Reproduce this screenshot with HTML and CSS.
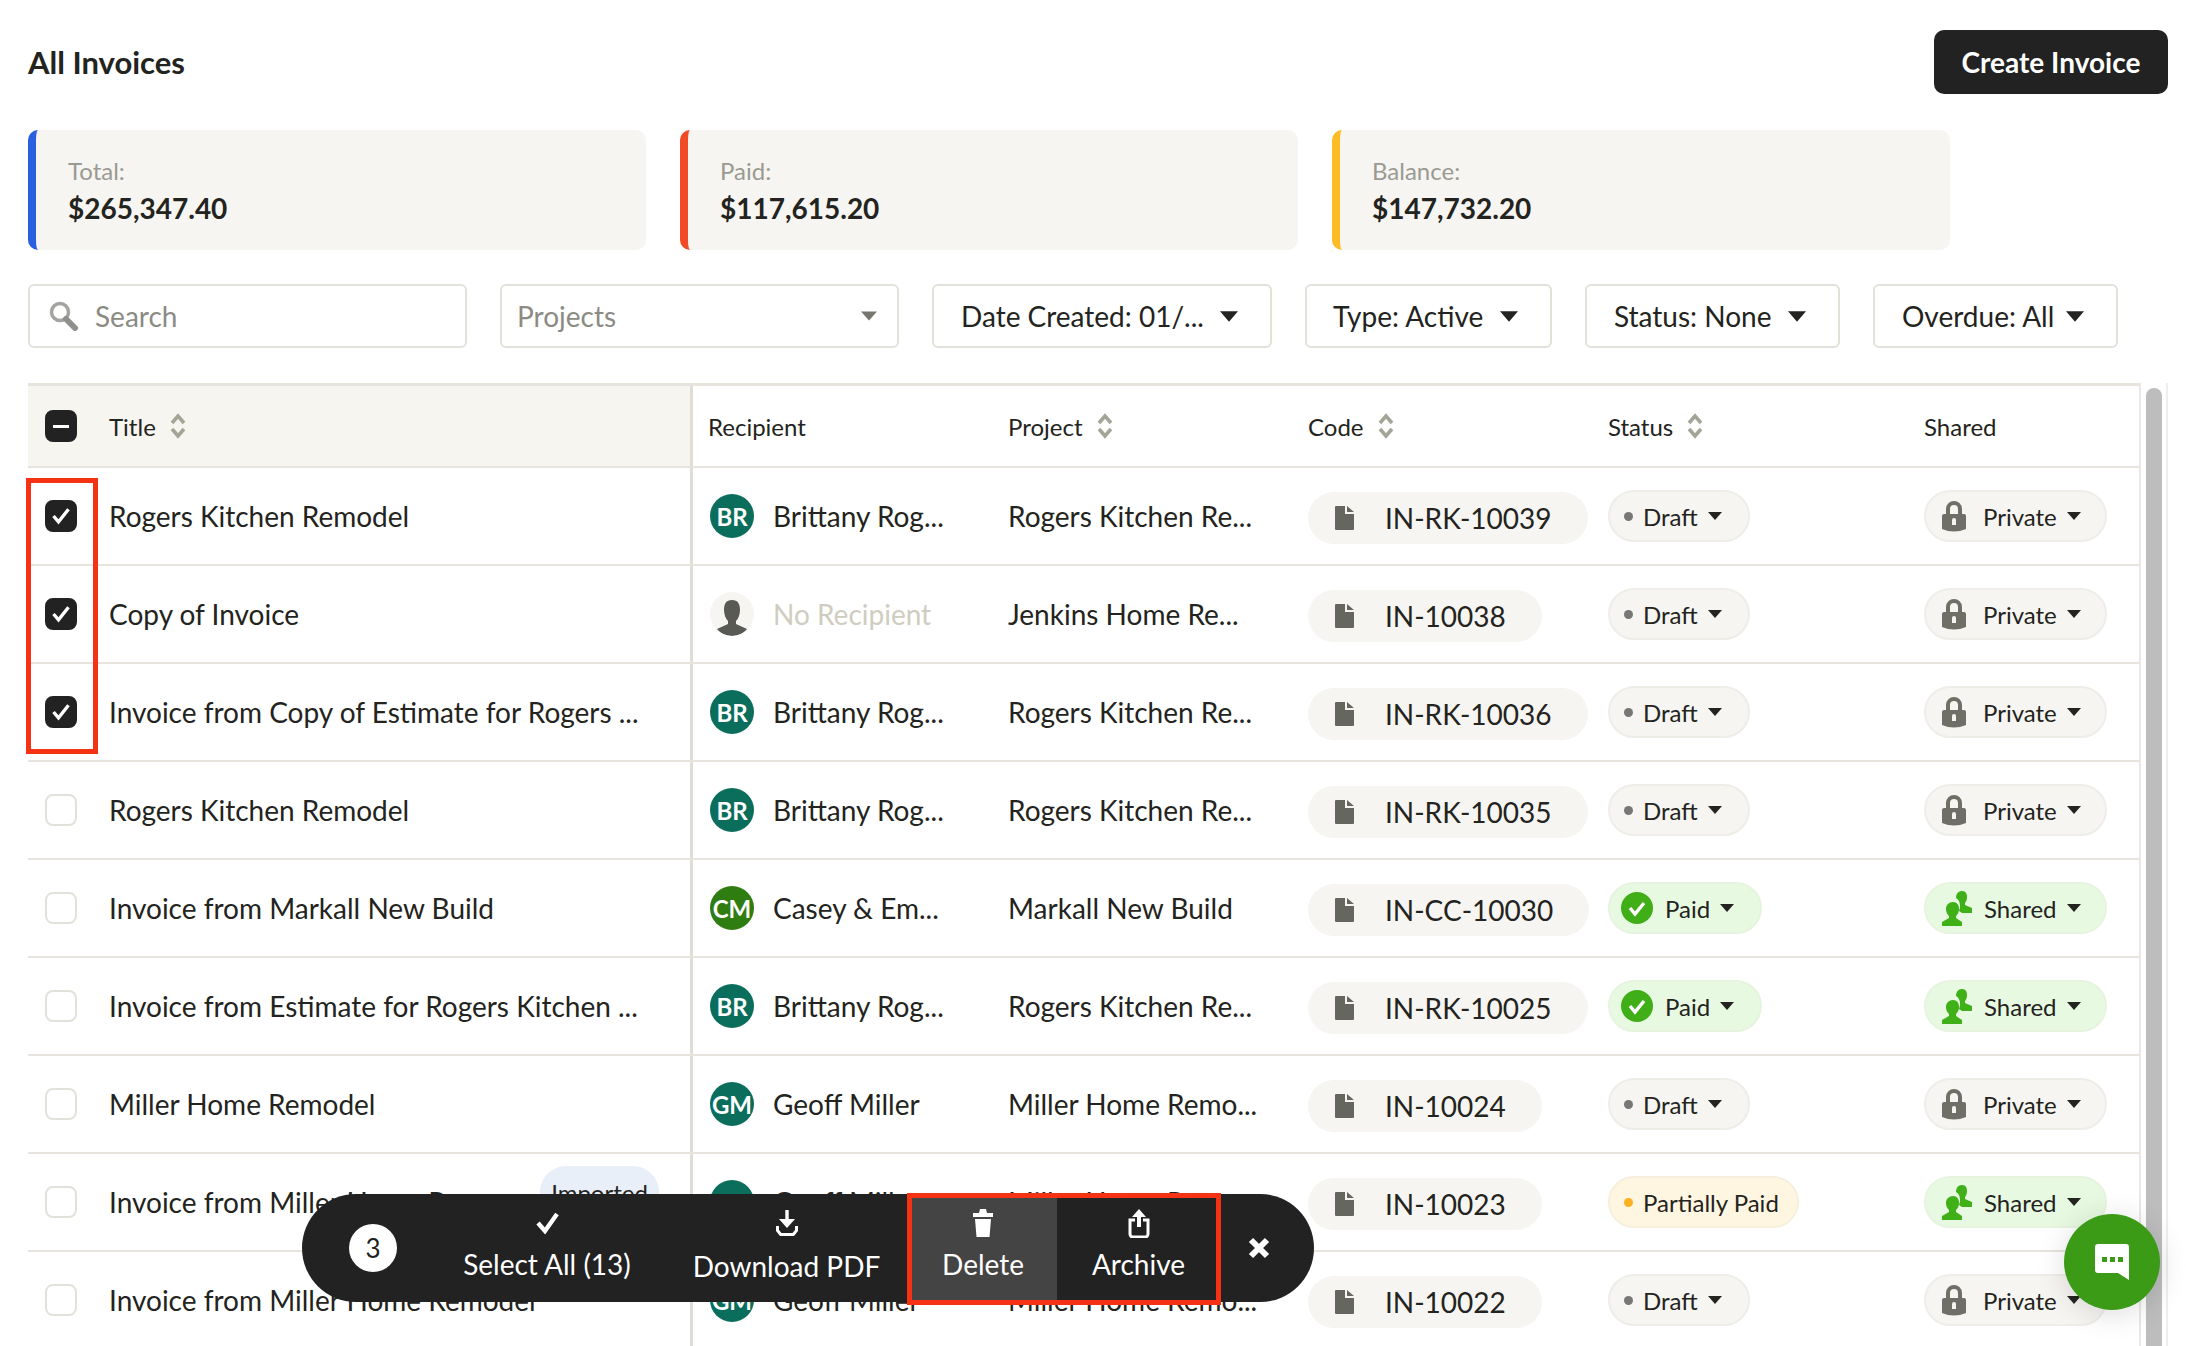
FILE: index.html
```html
<!DOCTYPE html>
<html lang="en">
<head>
<meta charset="utf-8">
<title>All Invoices</title>
<link rel="stylesheet" href="styles.css">
</head>
<body>
<svg class="sprite" width="0" height="0" aria-hidden="true">
  <defs>
    <symbol id="i-sort" viewBox="0 0 16 26"><path d="M2 10 8 3l6 7M2 16l6 7 6-7" fill="none" stroke="currentColor" stroke-width="3.6"/></symbol>
    <symbol id="i-caret" viewBox="0 0 14 8"><path d="M0 0h14L7 8z" fill="currentColor"/></symbol>
    <symbol id="i-doc" viewBox="0 0 19 24"><path d="M1 0h9v8h9v15a1 1 0 0 1-1 1H1a1 1 0 0 1-1-1V1a1 1 0 0 1 1-1zM12 0l7 6h-7z" fill="currentColor"/></symbol>
    <symbol id="i-lock" viewBox="0 0 24 32"><path fill-rule="evenodd" d="M4 14V9a8 8 0 0 1 16 0v5h2a2 2 0 0 1 2 2v13q-12 5-24 0V16a2 2 0 0 1 2-2zm4 0h8V9a4 4 0 0 0-8 0zm4 4a2 2 0 0 0-2 2v5h4v-5a2 2 0 0 0-2-2z" fill="currentColor"/></symbol>
    <symbol id="i-shared" viewBox="0 0 30 36"><path d="M11 12c4 0 6 3 6 7 0 3-1 5-3 7v2l6 4v4H0v-4l7-4v-2c-2-2-3-4-3-7 0-4 3-7 7-7zM20 1c4 0 5 3 5 6 0 3-1 5-2 6v2l7 3v5H20l-3-2c2-5 1-11-3-13 0-4 2-7 6-7z" fill="currentColor"/></symbol>
    <symbol id="i-paid" viewBox="0 0 32 32"><circle cx="16" cy="16" r="16" fill="#3fae17"/><path d="m9 16 5 6 9-11" fill="none" stroke="#fff" stroke-width="3.4"/></symbol>
    <symbol id="i-check" viewBox="0 0 24 20"><path d="m3 10 6 7L21 2" fill="none" stroke="currentColor" stroke-width="4"/></symbol>
  </defs>
</svg>

<main class="page">
  <header class="top">
    <h1 class="heading">All Invoices</h1>
    <button class="create">Create Invoice</button>
  </header>

  <section class="stats">
    <div class="stat stat-blue"><span class="stat-label">Total:</span><span class="stat-value">$265,347.40</span></div>
    <div class="stat stat-red"><span class="stat-label">Paid:</span><span class="stat-value">$117,615.20</span></div>
    <div class="stat stat-yellow"><span class="stat-label">Balance:</span><span class="stat-value">$147,732.20</span></div>
  </section>

  <section class="filters">
    <div class="filter f-search">
      <svg class="search-icon" viewBox="0 0 30 30"><circle cx="11" cy="11" r="8.5" fill="none" stroke="#a3a3a0" stroke-width="3.5"/><path d="m17 18 9 9" stroke="#8f8f8c" stroke-width="6" stroke-linecap="round"/></svg>
      <span class="muted">Search</span>
    </div>
    <div class="filter f-projects"><span class="muted">Projects</span><svg class="caret-gray"><use href="#i-caret"/></svg></div>
    <div class="filter f-date"><span>Date Created: 01/...</span><svg class="caret-big"><use href="#i-caret"/></svg></div>
    <div class="filter f-type"><span>Type: Active</span><svg class="caret-big"><use href="#i-caret"/></svg></div>
    <div class="filter f-status"><span>Status: None</span><svg class="caret-big"><use href="#i-caret"/></svg></div>
    <div class="filter f-overdue"><span>Overdue: All</span><svg class="caret-big"><use href="#i-caret"/></svg></div>
  </section>

  <section class="table-wrap">
    <div class="table">
      <div class="row head">
        <div class="cell c-title"><span class="box box-on"><i class="minus"></i></span><span>Title</span><svg class="sort"><use href="#i-sort"/></svg></div>
        <div class="cell c-rec"><span>Recipient</span></div>
        <div class="cell"><span>Project</span><svg class="sort"><use href="#i-sort"/></svg></div>
        <div class="cell"><span>Code</span><svg class="sort"><use href="#i-sort"/></svg></div>
        <div class="cell"><span>Status</span><svg class="sort"><use href="#i-sort"/></svg></div>
        <div class="cell c-shared"><span>Shared</span></div>
      </div>

      <div class="row">
        <div class="cell c-title"><span class="box box-on"><svg class="tick"><use href="#i-check"/></svg></span><span>Rogers Kitchen Remodel</span></div>
        <div class="cell c-rec"><span class="avatar teal">BR</span><span>Brittany Rog...</span></div>
        <div class="cell">Rogers Kitchen Re...</div>
        <div class="cell"><span class="code"><svg class="doc"><use href="#i-doc"/></svg>IN-RK-10039</span></div>
        <div class="cell"><span class="pill"><i class="dot"></i>Draft<svg class="caret"><use href="#i-caret"/></svg></span></div>
        <div class="cell c-shared"><span class="pill share"><svg class="lock"><use href="#i-lock"/></svg>Private<svg class="caret"><use href="#i-caret"/></svg></span></div>
      </div>

      <div class="row">
        <div class="cell c-title"><span class="box box-on"><svg class="tick"><use href="#i-check"/></svg></span><span>Copy of Invoice</span></div>
        <div class="cell c-rec"><span class="avatar none"><svg class="person" viewBox="0 0 32 36"><path d="M16 0c6 0 8 4 8 10 0 5-2 9-4 11v3l11 5c-3 4-9 7-15 7S4 33 1 29l11-5v-3c-2-2-4-6-4-11C8 4 10 0 16 0z" fill="#5a5a54"/></svg></span><span class="faded">No Recipient</span></div>
        <div class="cell">Jenkins Home Re...</div>
        <div class="cell"><span class="code"><svg class="doc"><use href="#i-doc"/></svg>IN-10038</span></div>
        <div class="cell"><span class="pill"><i class="dot"></i>Draft<svg class="caret"><use href="#i-caret"/></svg></span></div>
        <div class="cell c-shared"><span class="pill share"><svg class="lock"><use href="#i-lock"/></svg>Private<svg class="caret"><use href="#i-caret"/></svg></span></div>
      </div>

      <div class="row">
        <div class="cell c-title"><span class="box box-on"><svg class="tick"><use href="#i-check"/></svg></span><span>Invoice from Copy of Estimate for Rogers ...</span></div>
        <div class="cell c-rec"><span class="avatar teal">BR</span><span>Brittany Rog...</span></div>
        <div class="cell">Rogers Kitchen Re...</div>
        <div class="cell"><span class="code"><svg class="doc"><use href="#i-doc"/></svg>IN-RK-10036</span></div>
        <div class="cell"><span class="pill"><i class="dot"></i>Draft<svg class="caret"><use href="#i-caret"/></svg></span></div>
        <div class="cell c-shared"><span class="pill share"><svg class="lock"><use href="#i-lock"/></svg>Private<svg class="caret"><use href="#i-caret"/></svg></span></div>
      </div>

      <div class="row">
        <div class="cell c-title"><span class="box"></span><span>Rogers Kitchen Remodel</span></div>
        <div class="cell c-rec"><span class="avatar teal">BR</span><span>Brittany Rog...</span></div>
        <div class="cell">Rogers Kitchen Re...</div>
        <div class="cell"><span class="code"><svg class="doc"><use href="#i-doc"/></svg>IN-RK-10035</span></div>
        <div class="cell"><span class="pill"><i class="dot"></i>Draft<svg class="caret"><use href="#i-caret"/></svg></span></div>
        <div class="cell c-shared"><span class="pill share"><svg class="lock"><use href="#i-lock"/></svg>Private<svg class="caret"><use href="#i-caret"/></svg></span></div>
      </div>

      <div class="row">
        <div class="cell c-title"><span class="box"></span><span>Invoice from Markall New Build</span></div>
        <div class="cell c-rec"><span class="avatar green">CM</span><span>Casey &amp; Em...</span></div>
        <div class="cell">Markall New Build</div>
        <div class="cell"><span class="code"><svg class="doc"><use href="#i-doc"/></svg>IN-CC-10030</span></div>
        <div class="cell"><span class="pill pill-green pill-paid"><svg class="paid"><use href="#i-paid"/></svg>Paid<svg class="caret"><use href="#i-caret"/></svg></span></div>
        <div class="cell c-shared"><span class="pill share pill-green"><svg class="shared"><use href="#i-shared"/></svg>Shared<svg class="caret"><use href="#i-caret"/></svg></span></div>
      </div>

      <div class="row">
        <div class="cell c-title"><span class="box"></span><span>Invoice from Estimate for Rogers Kitchen ...</span></div>
        <div class="cell c-rec"><span class="avatar teal">BR</span><span>Brittany Rog...</span></div>
        <div class="cell">Rogers Kitchen Re...</div>
        <div class="cell"><span class="code"><svg class="doc"><use href="#i-doc"/></svg>IN-RK-10025</span></div>
        <div class="cell"><span class="pill pill-green pill-paid"><svg class="paid"><use href="#i-paid"/></svg>Paid<svg class="caret"><use href="#i-caret"/></svg></span></div>
        <div class="cell c-shared"><span class="pill share pill-green"><svg class="shared"><use href="#i-shared"/></svg>Shared<svg class="caret"><use href="#i-caret"/></svg></span></div>
      </div>

      <div class="row">
        <div class="cell c-title"><span class="box"></span><span>Miller Home Remodel</span></div>
        <div class="cell c-rec"><span class="avatar teal">GM</span><span>Geoff Miller</span></div>
        <div class="cell">Miller Home Remo...</div>
        <div class="cell"><span class="code"><svg class="doc"><use href="#i-doc"/></svg>IN-10024</span></div>
        <div class="cell"><span class="pill"><i class="dot"></i>Draft<svg class="caret"><use href="#i-caret"/></svg></span></div>
        <div class="cell c-shared"><span class="pill share"><svg class="lock"><use href="#i-lock"/></svg>Private<svg class="caret"><use href="#i-caret"/></svg></span></div>
      </div>

      <div class="row">
        <div class="cell c-title"><span class="box"></span><span>Invoice from Miller Home Re...</span><span class="tag">Imported</span></div>
        <div class="cell c-rec"><span class="avatar teal">GM</span><span>Geoff Miller</span></div>
        <div class="cell">Miller Home Remo...</div>
        <div class="cell"><span class="code"><svg class="doc"><use href="#i-doc"/></svg>IN-10023</span></div>
        <div class="cell"><span class="pill pill-yellow"><i class="dot dot-yellow"></i>Partially Paid</span></div>
        <div class="cell c-shared"><span class="pill share pill-green"><svg class="shared"><use href="#i-shared"/></svg>Shared<svg class="caret"><use href="#i-caret"/></svg></span></div>
      </div>

      <div class="row">
        <div class="cell c-title"><span class="box"></span><span>Invoice from Miller Home Remodel</span></div>
        <div class="cell c-rec"><span class="avatar teal">GM</span><span>Geoff Miller</span></div>
        <div class="cell">Miller Home Remo...</div>
        <div class="cell"><span class="code"><svg class="doc"><use href="#i-doc"/></svg>IN-10022</span></div>
        <div class="cell"><span class="pill"><i class="dot"></i>Draft<svg class="caret"><use href="#i-caret"/></svg></span></div>
        <div class="cell c-shared"><span class="pill share"><svg class="lock"><use href="#i-lock"/></svg>Private<svg class="caret"><use href="#i-caret"/></svg></span></div>
      </div>
    </div>
    <div class="scrollbar"><div class="thumb"></div></div>
  </section>
</main>

<div class="mark mark-checks"></div>

<div class="bulk">
  <span class="count">3</span>
  <div class="bulk-item b-select">
    <svg class="b-icon" viewBox="0 0 30 30"><path d="m6 15 7 8L25 6" fill="none" stroke="#fff" stroke-width="4.4"/></svg>
    <span>Select All (13)</span>
  </div>
  <div class="bulk-item b-download">
    <svg class="b-icon" viewBox="0 0 30 30"><path d="M15 2v15" stroke="#fff" stroke-width="3.4"/><path d="M7 11h16l-8 9z" fill="#fff"/><path d="M4 18v5l4 5h14l4-5v-5l-3 0v4l-2.500 3H9.500L7 22v-4z" fill="#fff"/></svg>
    <span>Download PDF</span>
  </div>
  <div class="bulk-item b-delete">
    <svg class="b-icon" viewBox="0 0 30 30"><path d="M12 1h6l1 4h6v4H5V5h6zM7 11h16l-1.500 18h-13z" fill="#fff"/></svg>
    <span>Delete</span>
  </div>
  <div class="bulk-item b-archive">
    <svg class="b-icon" viewBox="0 0 30 30"><path d="M15 1l7 8h-5v10h-4V9H8z" fill="#fff"/><path d="M11 12H6v14a3 3 0 0 0 3 3h12a3 3 0 0 0 3-3V12h-5" fill="none" stroke="#fff" stroke-width="3"/></svg>
    <span>Archive</span>
  </div>
  <svg class="b-close" viewBox="0 0 24 24"><path d="m4 4 16 16M20 4 4 20" stroke="#fff" stroke-width="6"/></svg>
  <div class="mark mark-actions"></div>
</div>

<button class="chat" aria-label="Chat">
  <svg viewBox="0 0 34 36" class="chat-icon"><path d="M3 0h28a3 3 0 0 1 3 3v33l-11-7H3a3 3 0 0 1-3-3V3a3 3 0 0 1 3-3z" fill="#fff"/><path d="M7 13h5v5H7zM15 13h5v5h-5zM23 13h5v5h-5z" fill="#3b9a16"/></svg>
</button>
</body>
</html>
```

FILE: styles.css
```css
* { box-sizing: border-box; }
html, body { margin: 0; height: 1346px; overflow: hidden; background: #fff; }
body { font-family: "Lato", "Noto Sans", sans-serif; color: #232320; font-size: 28px; position: relative; }
.sprite { position: absolute; }

.page { padding: 30px 18px 0 28px; }
.top { display: flex; justify-content: space-between; align-items: center; height: 64px; }
.heading { margin: 0; font-size: 31px; font-weight: 700; color: #232320; }
.create { width: 234px; height: 64px; border: 0; border-radius: 10px; background: #222; color: #fff; font: 700 28px "Lato", sans-serif; }

.stats { display: flex; gap: 34px; margin-top: 36px; }
.stat { width: 618px; height: 120px; background: #f6f5f1; border-left: 8px solid; border-radius: 10px; padding: 27px 32px 0; display: flex; flex-direction: column; gap: 5px; }
.stat-blue { border-color: #2a5fe0; }
.stat-red { border-color: #f04a26; }
.stat-yellow { border-color: #fdbb25; }
.stat-label { font-size: 24px; color: #9a9a92; line-height: 28px; }
.stat-value { font-size: 28px; font-weight: 700; line-height: 36px; }

.filters { display: flex; gap: 33px; margin-top: 34px; }
.filter { height: 64px; border: 2px solid #e3e2da; border-radius: 6px; display: flex; align-items: center; justify-content: space-between; background: #fff; }
.f-search { width: 439px; justify-content: flex-start; gap: 16px; padding: 0 19px; }
.f-projects { width: 399px; padding: 0 20px 0 15px; }
.f-date { width: 340px; padding: 0 32px 0 27px; }
.f-type { width: 247px; padding: 0 32px 0 26px; }
.f-status { width: 255px; padding: 0 32px 0 27px; }
.f-overdue { width: 245px; padding: 0 32px 0 27px; }
.muted { color: #8b8b84; }
.search-icon { width: 30px; height: 30px; }
.caret-gray { width: 16px; height: 10px; color: #77776f; }
.caret-big { width: 18px; height: 11px; color: #232320; }

.table-wrap { display: flex; gap: 5px; margin-top: 35px; }
.table { width: 2113px; height: 963px; border-top: 3px solid #e6e4dc; border-right: 2px solid #e9e8e2; flex: none; }
.row { display: grid; grid-template-columns: 665px 315px 300px 300px 316px 1fr; height: 98px; border-bottom: 2px solid #e6e4dc; }
.row.head { height: 82px; font-size: 24px; }
.cell { display: flex; align-items: center; white-space: nowrap; }
.c-title { gap: 32px; padding-left: 17px; border-right: 3px solid #e0ded3; position: relative; }
.head .c-title { background: #f6f5f0; }
.c-rec { gap: 19px; padding-left: 17px; }
.head .c-rec { padding-left: 15px; }
.head .sort { margin-left: 14px; }
.head .c-title .sort { margin-left: -18px; }
.sort { width: 16px; height: 26px; color: #a3a596; }

.box { width: 32px; height: 32px; border: 2px solid #e3e2da; border-radius: 8px; display: flex; align-items: center; justify-content: center; flex: none; background: #fff; }
.box-on { background: #222; border-color: #222; }
.minus { width: 16px; height: 3px; background: #fff; }
.tick { width: 20px; height: 18px; color: #fff; }

.avatar { width: 44px; height: 44px; border-radius: 50%; display: flex; align-items: center; justify-content: center; color: #fff; font-size: 24px; font-weight: 700; flex: none; }
.teal { background: #0b6e5d; }
.green { background: #2f7d11; }
.none { background: #f6f5f1; overflow: hidden; align-items: flex-end; }
.person { width: 32px; height: 36px; }
.faded { color: #cfcdc0; }

.code { display: inline-flex; align-items: center; height: 52px; margin-top: 4px; padding: 0 36px 0 27px; gap: 31px; border-radius: 26px; background: #f6f5f1; }
.doc { width: 19px; height: 24px; color: #666660; }

.pill { display: inline-flex; align-items: center; height: 52px; padding: 0 26px 0 14px; border: 2px solid #eeede8; border-radius: 26px; background: #f6f5f1; font-size: 24px; }
.dot { width: 9px; height: 9px; border-radius: 50%; background: #777; margin-right: 10px; }
.dot-yellow { background: #fdb022; }
.caret { width: 14px; height: 8px; margin-left: 10px; color: #232320; }
.pill-green { background: #e8f9e2; border-color: #e6f4df; }
.pill-yellow { background: #fff6e2; border-color: #f6efdd; padding-right: 18px; }
.pill-paid { padding-left: 11px; }
.paid { width: 32px; height: 32px; margin-right: 12px; }
.share { padding: 0 24px 0 16px; }
.lock { width: 24px; height: 32px; margin-right: 17px; color: #6f6f68; }
.shared { width: 30px; height: 36px; color: #3fb017; margin-right: 12px; }

.tag { position: absolute; left: 512px; top: 12px; height: 52px; width: 119px; border-radius: 26px; background: #e9eff8; display: flex; align-items: center; justify-content: center; font-size: 24px; }

.scrollbar { width: 26px; height: 963px; border-right: 2px solid #eee; padding-top: 5px; }
.thumb { width: 16px; height: 100%; background: #bdbdbd; border-radius: 8px 8px 0 0; }

.mark { position: absolute; border: 5px solid #f53314; pointer-events: none; }
.mark-checks { left: 26px; top: 478px; width: 72px; height: 276px; }

.bulk { position: absolute; left: 302px; top: 1194px; width: 1012px; height: 108px; border-radius: 54px; background: #222; color: #fff; font-size: 28px; display: flex; align-items: stretch; }
.count { width: 48px; height: 48px; margin: 30px 33px 0 47px; border-radius: 50%; background: #fff; color: #222; display: flex; align-items: center; justify-content: center; font-size: 26px; flex: none; }
.bulk-item { display: flex; flex-direction: column; align-items: center; padding-top: 14px; gap: 9px; white-space: nowrap; justify-content: flex-start; }
.b-icon { width: 30px; height: 30px; }
.b-select { width: 234px; }
.b-download { width: 245px; }
.b-download span { margin-top: 2px; }
.b-delete { width: 148px; background: #444; }
.b-archive { width: 163px; }
.b-close { width: 24px; height: 28px; margin: 40px 0 0 27px; }
.mark-actions { left: 605px; top: -1px; width: 314px; height: 112px; }

.chat { position: absolute; left: 2064px; top: 1214px; width: 96px; height: 96px; border: 0; border-radius: 50%; background: #3b9a16; box-shadow: 0 4px 30px rgba(0,0,0,.14); display: flex; align-items: center; justify-content: center; padding: 0; }
.chat-icon { width: 34px; height: 36px; }
```
